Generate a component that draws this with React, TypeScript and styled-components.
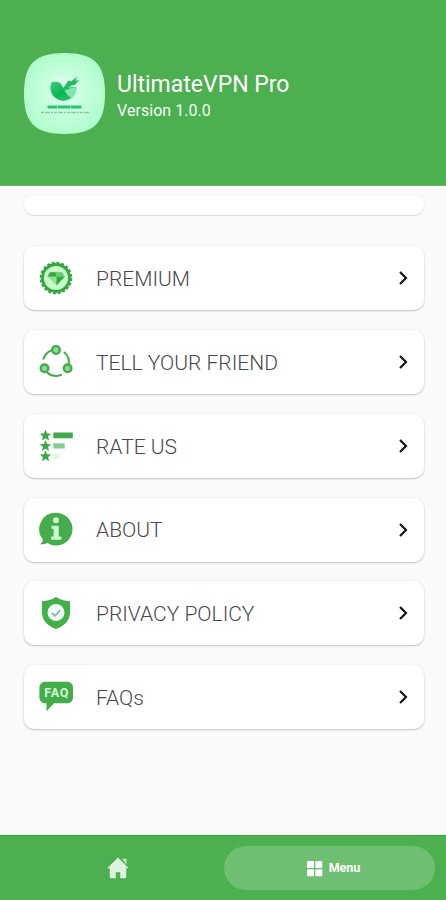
import React from "react";
import styled, { createGlobalStyle } from "styled-components";

const Global = createGlobalStyle`
  * { box-sizing: border-box; }
  body { margin: 0; background: #fafafa; font-family: Roboto, "Liberation Sans", sans-serif; }
`;

const Screen = styled.div`
  display: flex;
  flex-direction: column;
  width: 446px;
  height: 900px;
  overflow: hidden;
  background: #fafafa;
`;

const Header = styled.header`
  display: flex;
  align-items: center;
  flex: none;
  height: 186px;
  padding: 2px 24px 0;
  gap: 12px;
  background: #4caf50;
  border-bottom: 1px solid #62b866;
`;

const AppIcon = styled.svg`
  width: 81px;
  height: 81px;
  flex: none;
`;

const AppInfo = styled.div`
  display: flex;
  flex-direction: column;
  padding-top: 6px;
`;

const AppName = styled.h1`
  margin: 0;
  color: #fff;
  font-size: 23px;
  line-height: 28px;
  font-weight: 400;
  white-space: nowrap;
`;

const Version = styled.span`
  color: #f4fff4;
  font-size: 16px;
  line-height: 22px;
  letter-spacing: 0.05px;
  margin-top: 1px;
`;

const Content = styled.main`
  display: flex;
  flex-direction: column;
  flex: 1;
  padding: 10px 22px 0 24px;
  border-top: 3px solid #fdfffd;
`;

const cardShadow = "0 1px 2px rgba(0, 0, 0, 0.22), 0 0 2px rgba(0, 0, 0, 0.07)";

const ScrolledCard = styled.div`
  flex: none;
  height: 19px;
  margin-top: -3px;
  border-radius: 7px 7px 10px 10px;
  background: #fff;
  box-shadow: 0 1px 1px rgba(0, 0, 0, 0.12), 0 0 2px rgba(0, 0, 0, 0.05);
`;

const MenuList = styled.nav`
  display: flex;
  flex-direction: column;
  gap: 19.75px;
  margin-top: 31.3px;
  width: 399.5px;
`;

const MenuCard = styled.a`
  display: flex;
  align-items: center;
  height: 64px;
  padding: 0 14px 0 14px;
  border-radius: 10px;
  background: #fff;
  box-shadow: ${cardShadow};
`;

const RowIcon = styled.svg`
  width: 36px;
  height: 36px;
  flex: none;
`;

const Label = styled.span`
  flex: 1;
  margin-left: 22px;
  padding-top: 1.5px;
  color: #484848;
  font-size: 21px;
  line-height: 26px;
  font-weight: 300;
  white-space: nowrap;
`;

const Chevron = styled.svg`
  width: 14px;
  height: 18px;
  flex: none;
`;

const BottomBar = styled.footer`
  display: flex;
  flex: none;
  height: 65px;
  padding: 10px 11px 10px 12px;
  background: #4caf50;
  border-top: 1px solid #35a13b;
`;

const Tab = styled.button<{ $active?: boolean }>`
  display: flex;
  flex: none;
  align-items: center;
  justify-content: center;
  gap: 6px;
  width: ${(p) => (p.$active ? 211 : 212)}px;
  height: 44px;
  padding: ${(p) => (p.$active ? "0 0 0 7px" : "0")};
  border: 0;
  border-radius: 22px;
  background: ${(p) => (p.$active ? "#6fbf73" : "transparent")};
  color: #fff;
  font: 700 12.5px/16px Roboto, "Liberation Sans", sans-serif;
`;

const TabIcon = styled.svg<{ $size: number }>`
  width: ${(p) => p.$size}px;
  height: ${(p) => p.$size}px;
`;

const Premium = () => (
  <RowIcon viewBox="0 0 36 36">
    <circle cx="18" cy="18" r="15.4" fill="none" stroke="#37a43e" strokeWidth="1.8" strokeDasharray="3 1.838" />
    <circle cx="18" cy="18" r="13.5" fill="#c8fccb" stroke="#37a43e" strokeWidth="2.8" />
    <path d="M12.2 12.3h11.6l3 4.2L18.5 25.5 9.5 16.5z" fill="#8be394" />
    <path d="M12.2 12.3h5.3l1 4.2H9.5z" fill="#36a83e" />
    <path d="M18.5 16.5h8.3L18.5 25.5z" fill="#36a83e" />
    <path d="M17.5 12.3h6.3l3 4.2h-8.3z" fill="#64cb6d" />
  </RowIcon>
);

const Share = () => (
  <RowIcon viewBox="0 0 36 36">
    <g fill="none" stroke="#42ad48" strokeWidth="2" strokeLinecap="round">
      <path d="M5.5 14.8c1.7-4.7 4.8-7.7 9.2-8.7" />
      <path d="M26.4 8.6c3.9 3.3 5.2 7 4.4 12.2" />
      <path d="M9.2 28.5c4 3.8 9.3 4.2 14 2.4" />
      <g fill="#8ed99a" strokeWidth="2.4">
        <circle cx="18" cy="5.9" r="3.8" />
        <circle cx="6.5" cy="24.3" r="3.8" />
        <circle cx="29.6" cy="24.3" r="3.8" />
      </g>
    </g>
  </RowIcon>
);

const star = "M0-5.9 1.6-2 5.7-1.7 2.6.9 3.6 5 0 2.8-3.6 5-2.6.9-5.7-1.7-1.6-2z";

const Rate = () => (
  <RowIcon viewBox="0 0 36 36">
    {[7.5, 18, 28.3].map((y) => (
      <path key={y} d={star} fill="#3aa944" transform={`translate(7.5 ${y})`} />
    ))}
    <path d="M15.3 4.5h19.5v5.8H15.3z" fill="#42aa49" />
    <path d="M15.3 15.3h11.4v5.2H15.3z" fill="#83cc89" />
    <path d="M15.3 25.8h6.2v5.2h-6.2z" fill="#defae1" />
  </RowIcon>
);

const About = () => (
  <RowIcon viewBox="0 0 36 36">
    <path d="M18 .8a16.4 16.4 0 1 1-8.6 30.3c-2.5 1.2-5 1.5-7.4 1.1 1.6-1 2.6-2.7 2.9-4.7A16.4 16.4 0 0 1 18 .8z" fill="#45ad4c" />
    <circle cx="18" cy="8.3" r="3" fill="#cafbd0" />
    <path d="M13.5 13.7h7.2v10.9h2.6v3.1H13.2v-3.1h2.4v-7.8h-2.1z" fill="#cafbd0" />
  </RowIcon>
);

const Privacy = () => (
  <RowIcon viewBox="0 0 36 36">
    <path d="M18 1.8c4 2.9 8.4 4.2 14 4.5v11.2C32 25.8 25.6 31.4 18 34 10.4 31.4 4 25.8 4 17.5V6.3c5.6-.3 10-1.6 14-4.5z" fill="#43b149" />
    <circle cx="18" cy="17.6" r="8.5" fill="#f1fbf9" />
    <path d="m14 17.9 2.8 3 5.5-5.8" fill="none" stroke="#8fb2b8" strokeWidth="1.7" />
  </RowIcon>
);

const FaqText = styled.text`
  font: 800 12.5px Roboto, "Liberation Sans", sans-serif;
`;

const Faq = () => (
  <RowIcon viewBox="0 0 36 36">
    <path d="M6.8 2.8h22.8a5.4 5.4 0 0 1 5.4 5.4v10.6a5.4 5.4 0 0 1-5.4 5.4H16L8.5 32.3v-8.1H6.8a5.4 5.4 0 0 1-5.4-5.4V8.2a5.4 5.4 0 0 1 5.4-5.4z" fill="#42ad49" />
    <FaqText x="6.3" y="18" fill="#ccf8cf" textLength="24">FAQ</FaqText>
  </RowIcon>
);

const items = [
  { label: "PREMIUM", Icon: Premium },
  { label: "TELL YOUR FRIEND", Icon: Share },
  { label: "RATE US", Icon: Rate },
  { label: "ABOUT", Icon: About },
  { label: "PRIVACY POLICY", Icon: Privacy },
  { label: "FAQs", Icon: Faq },
];

const Logo = () => (
  <AppIcon viewBox="0 0 81 81">
    <defs>
      <radialGradient id="tile">
        <stop offset="0" stopColor="#e0fff0" />
        <stop offset="0.55" stopColor="#c4ffdc" />
        <stop offset="1" stopColor="#b2fdce" />
      </radialGradient>
      <linearGradient id="globe" x1="0" y1="0" x2="1" y2="1">
        <stop offset="0" stopColor="#35cf7d" />
        <stop offset="0.5" stopColor="#0cb455" />
        <stop offset="1" stopColor="#35c97a" />
      </linearGradient>
    </defs>
    <path d="M40.5 0C70 0 81 11 81 40.5S70 81 40.5 81 0 70 0 40.5 11 0 40.5 0z" fill="url(#tile)" />
    <circle cx="39.5" cy="36" r="13" fill="#dafbe8" />
    <path d="M27.5 29.5c3-1.5 7.500-1 9.500 1.500 1 2 1.500 3.500 3.500 4.500 3-.5 7-1.500 11.900-1A13 13 0 1 1 27.500 29.500z" fill="url(#globe)" />
    <path d="M40.500 37.500c4-1.500 7.500-3.500 11.500-3 .8 4.500-1 8.500-4.500 10.500-3-1.500-5-4-7-7.500z" fill="#7fe5ae" />
    <path d="m38.500 36 6-8.500 2.500 1 6.200-5-1.700 4.200 4-.7-4.700 4.700-3.300.8-6.500 5z" fill="#24bc69" />
    <path d="M23.500 54h34" stroke="#28c571" strokeWidth="3" strokeDasharray="10 .5 12 .6 12 .8" />
    <path d="M17 59.500h48" stroke="#8cc5a5" strokeWidth="1.7" strokeDasharray="3 1 5 1 2 1" />
  </AppIcon>
);

export default function App() {
  return (
    <Screen>
      <Global />
      <Header>
        <Logo />
        <AppInfo>
          <AppName>UltimateVPN Pro</AppName>
          <Version>Version 1.0.0</Version>
        </AppInfo>
      </Header>
      <Content>
        <ScrolledCard />
        <MenuList>
          {items.map(({ label, Icon }) => (
            <MenuCard key={label}>
              <Icon />
              <Label>{label}</Label>
              <Chevron viewBox="0 0 14 18">
                <path d="m4 3 6 6-6 6" fill="none" stroke="#151515" strokeWidth="2.2" />
              </Chevron>
            </MenuCard>
          ))}
        </MenuList>
      </Content>
      <BottomBar>
        <Tab aria-label="Home">
          <TabIcon $size={24} viewBox="0 0 24 24">
            <path d="M12 1.5 22.7 12.2h-2.5V21q0 1.3-1.3 1.3h-4.7v-6H9.8v6H5.1Q3.8 22.3 3.8 21v-8.8H1.3z" fill="#dff3e0" />
            <path d="M16 2.8h4.5v6z" fill="#c5e8c7" />
          </TabIcon>
        </Tab>
        <Tab $active>
          <TabIcon $size={17} viewBox="0 0 17 17" fill="#fff">
            <rect x="1" y="1" width="7" height="7" rx="1" />
            <rect x="9.3" y="1" width="7" height="7" rx="1" />
            <rect x="1" y="9.3" width="7" height="7" rx="1" />
            <rect x="9.3" y="9.3" width="7" height="7" rx="1" />
          </TabIcon>
          Menu
        </Tab>
      </BottomBar>
    </Screen>
  );
}
